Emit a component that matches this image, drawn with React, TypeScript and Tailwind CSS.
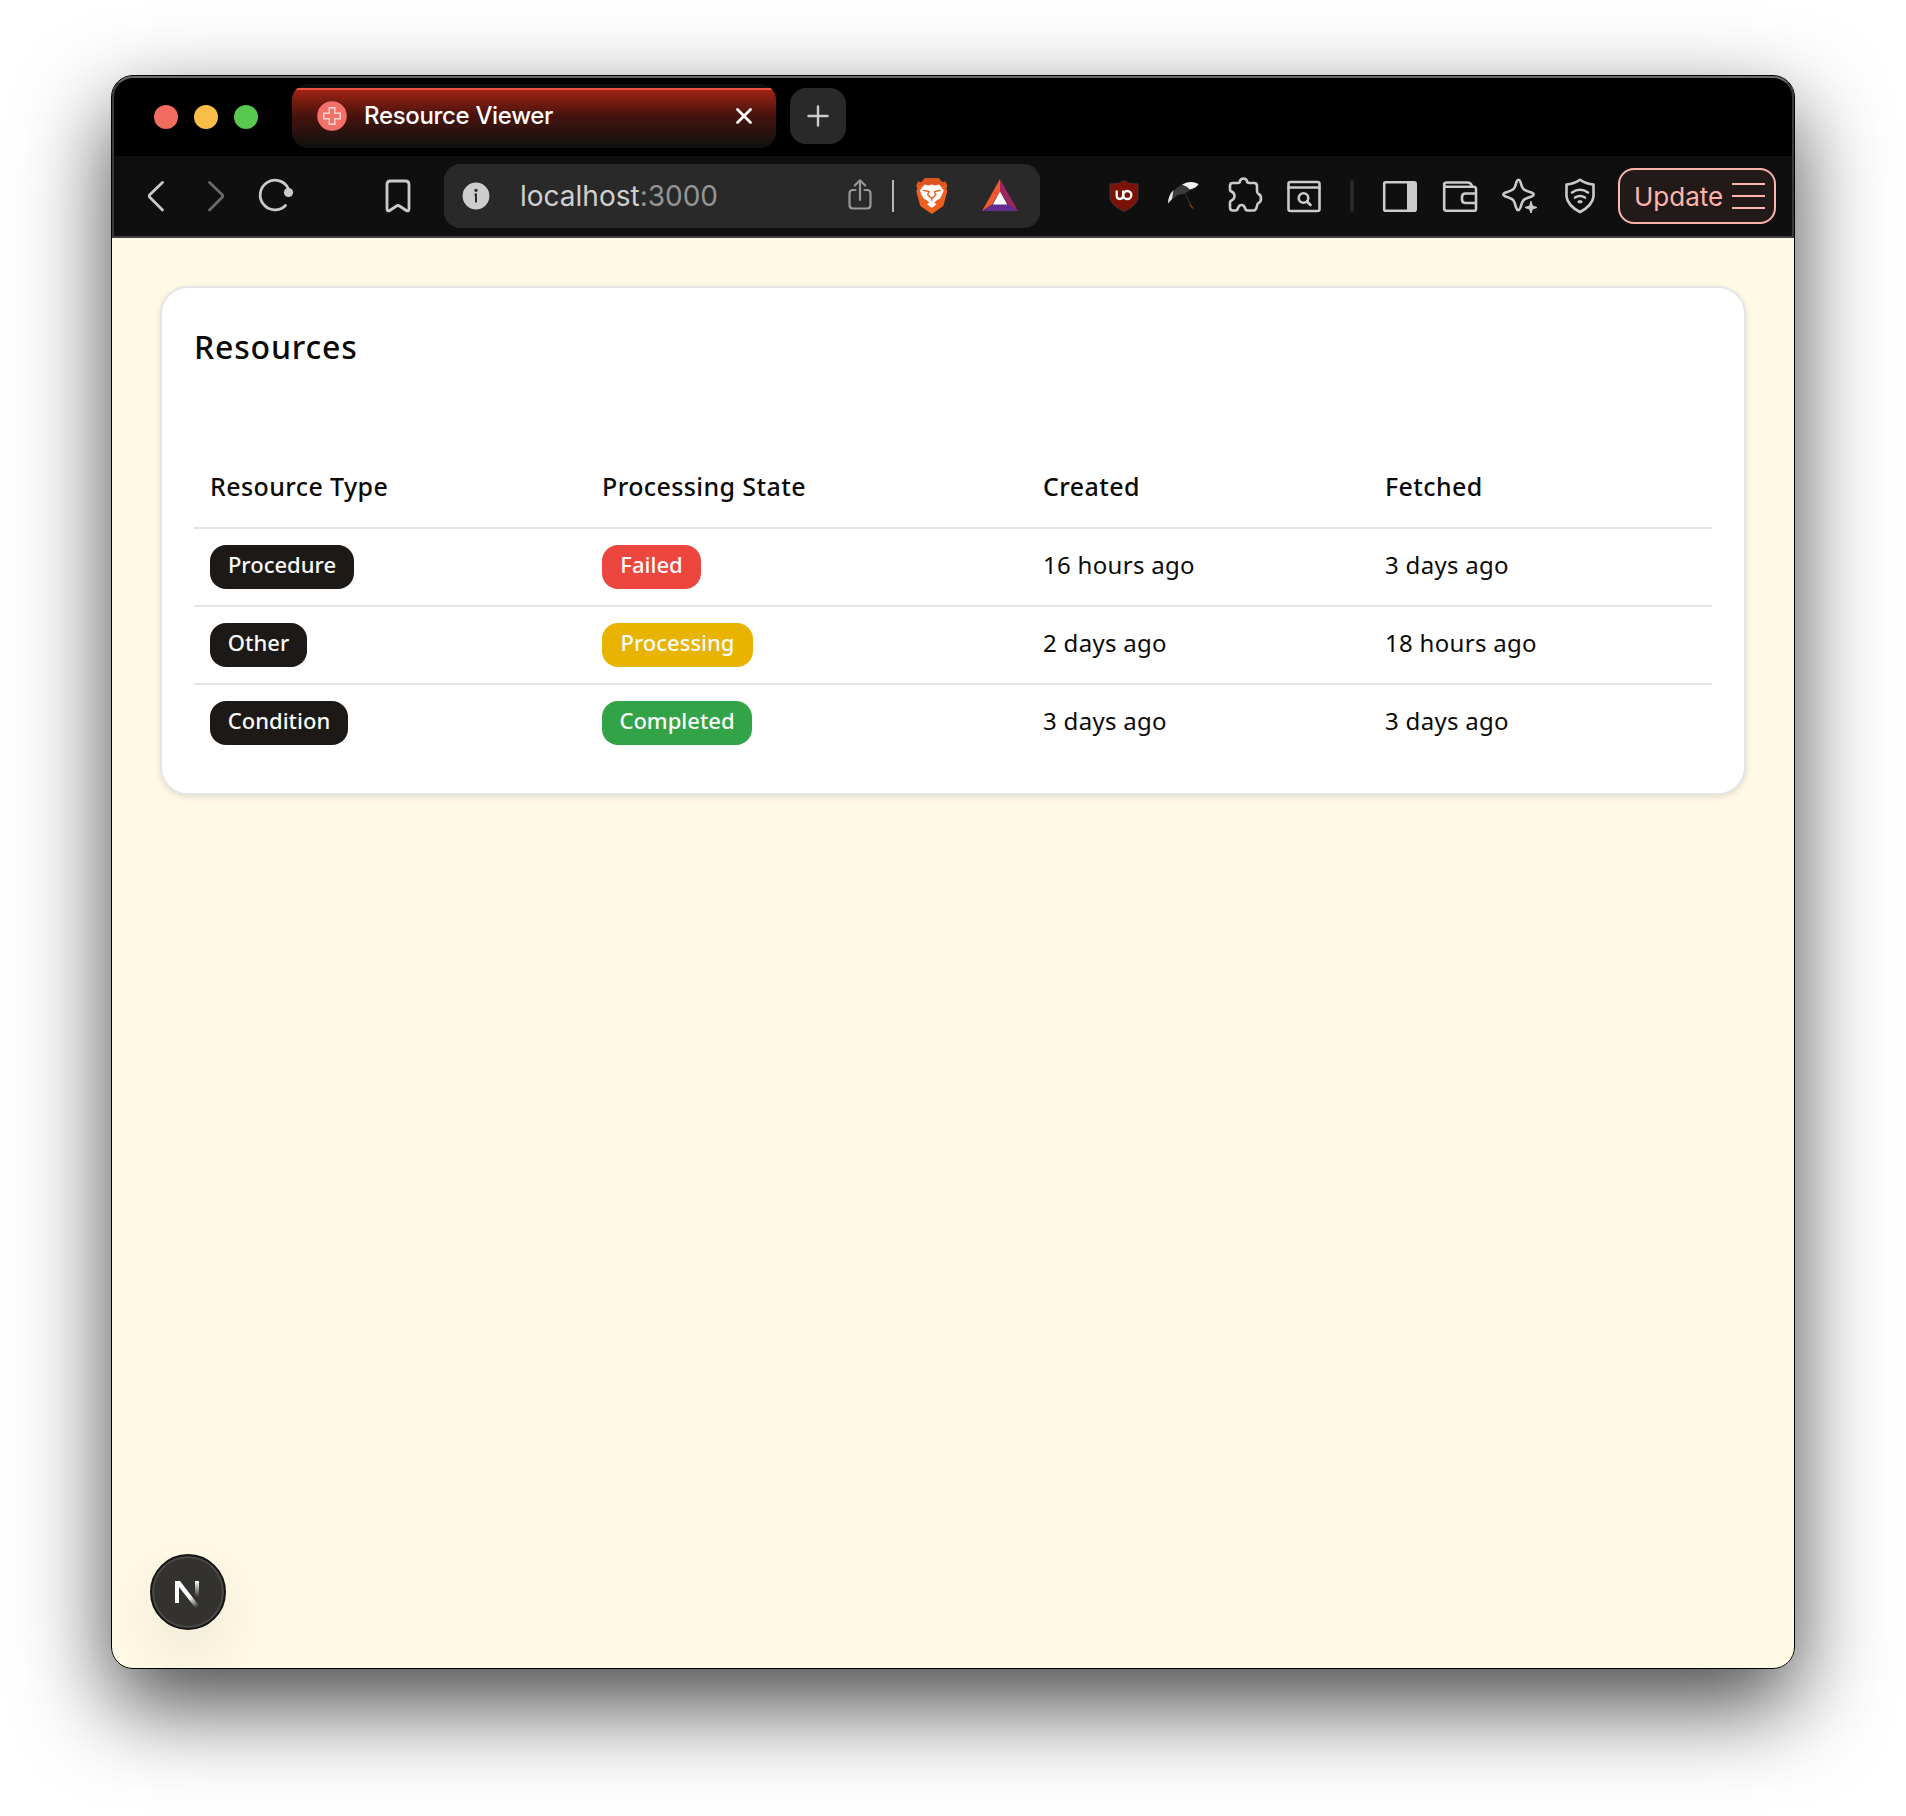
import React from "react";

function Toolbar() {
  return (
    <div className="flex h-[82px] items-center border-b-2 border-[#3f3f3f] bg-[#0f0f0f] text-[#c9c9c9]">
      <svg className="h-20 w-[332px] shrink-0" viewBox="112 156 332 80" fill="none" strokeLinecap="round" strokeLinejoin="round" strokeWidth="2.8" stroke="#cacaca">
        <path d="M162.5 182.5 150 194.5q-1.5 1.5 0 3L162.5 210" />
        <path d="M209.500 182.5 222 194.500q1.500 1.500 0 3L209.500 210" stroke="#6b6b6b" />
        <path d="M285.500 205.500A14.800 14.800 0 1 1 288.500 189" />
        <circle cx="288.500" cy="192.500" r="4.600" fill="#cacaca" stroke="none" />
        <path d="M387 208.500v-24q0-3.500 3.500-3.500h15q3.500 0 3.500 3.500v24q0 4-3.500 1.500l-6-4q-1.500-1-3 0l-6 4q-3.500 2.500-3.500-1.500Z" />
      </svg>
      <div className="flex h-16 w-[596px] shrink-0 items-center rounded-2xl bg-[#292929]">
        <svg className="ml-[18px] size-7" viewBox="0 0 28 28">
          <circle cx="14" cy="14" r="13.400" fill="#cdcdcd" />
          <circle cx="14" cy="8.300" r="1.600" fill="#292929" />
          <path d="M12.500 12.500h1.500v8" fill="none" stroke="#292929" strokeWidth="2" />
        </svg>
        <span className="ml-[30px] w-[310px] font-[Inter] text-[28px] leading-10 text-[#cfcfcf]">
          localhost<span className="text-[#949494]">:3000</span>
        </span>
        <svg className="h-16 w-[210px]" viewBox="830 164 210 64" fill="none">
          <g stroke="#989898" strokeWidth="2.2" strokeLinecap="round" strokeLinejoin="round">
            <path d="M855.500 190H853q-3.500 0-3.500 3.500V205q0 3.500 3.500 3.500h14q3.500 0 3.500-3.500v-11.500q0-3.500-3.500-3.500h-2.500M860 200v-19M854.800 185.500l5.200-5.200 5.200 5.200" />
          </g>
          <path d="M893 180v32" stroke="#b5b5b5" strokeWidth="2" />
          <path d="M925 178h13.500l3.800 4.200 3-.6 2 4-1 3 1 3-4 14.400-11.500 8-11.500-8-4-14.400 1-3-1-3 2-4 3 .6Z" fill="#ee5f20" />
          <path d="M925 178h13.500l3.800 4.200 3-.6 2 4H916.300l2-4 3 .6Z" fill="#dd561f" />
          <path d="m924.500 184.600 4 .8 3.300-.9 3.300.9 4-.8 4.600 5.900-1.600 4.100-2 4-3.300 1.600-2.400 2.300 1 1.500-3.600-1.800-3.600 1.800 1-1.500-2.400-2.300-3.300-1.600-2-4-1.600-4.100Z" fill="#fff" />
          <path d="m923 190.300 6 1.200-1.300 3.200 4 3.800 4-3.800-1.200-3.200 6-1.200M931.700 198.500v2.200" stroke="#ee5f20" strokeWidth="1.500" />
          <path d="m927 204.200 4.700-2.700 4.800 2.700-4.800 3.800Z" fill="#fff" />
          <path d="m1000 179-18 32 10-6.500 8-13Z" fill="#f15a2e" />
          <path d="m1000 179 18 32-10-6.500-8-13Z" fill="#9a2860" />
          <path d="m982 211 11-7h14l11 7Z" fill="#632e92" />
          <path d="m1000 191.500 7.300 13h-14.600Z" fill="#fff" />
        </svg>
      </div>
      <svg className="h-20 w-[578px] shrink-0" viewBox="1040 156 578 80" fill="none">
        <path d="M1124 180.500q6 4 14 3.500v14q-1.500 8-14 13.500-12.500-5.500-14-13.500v-14q8 .5 14-3.500Z" fill="#7b1208" stroke="#4d3a38" strokeWidth=".8" />
        <path d="M1116.700 190.500v5q0 3.500 3.200 3.500t3.200-3.500v-5" stroke="#fff" strokeWidth="2.300" />
        <circle cx="1127.300" cy="195" r="4" stroke="#fff" strokeWidth="2.300" />
        <path d="M1170 200q1-10 12-15.500l9 5-6 4-7 1.500-8 6Z" fill="#3a3a3a" />
        <path d="M1182 184.500q9-4.500 16.500-.5-1.500 3.500-8.500 5.500-4-3.500-8-5Z" fill="#f2f2f2" />
        <path d="M1168 203.500q0-8 5.500-13.500l-1.500 9Z" fill="#e5e5e5" />
        <path d="m1185 193 6 13" stroke="#332f2d" strokeWidth="1.200" />
        <path d="m1190 204.500 3 4" stroke="#6b3519" strokeWidth="1.900" />
        <g stroke="#cbcbcb" strokeWidth="2.600" strokeLinejoin="round" strokeLinecap="round">
          <path d="M1233 183h5q2.500 0 2.500-2 1-2.500 3.500-2.500t3.500 2.500q0 2 2.500 2h4.500q3 0 3 3v5q0 2 1.500 3 2.500 1 2.500 4.500t-2.500 4.500q-1.500 1-1.500 3-1 4.500-3.500 4.500h-6q-2 0-2.500-2.500-1-3-3.500-3t-3.500 3q-.5 2.500-2.500 2.500h-2.500q-3 0-3-3v-5q0-1.500 1.500-2 3-1.500 3-4.500t-3-4.500q-1.500-.5-1.500-2V186q0-3 2.500-3Z" transform="translate(-.5 0)" />
          <rect x="1288.500" y="182" width="31" height="29" rx="2" />
          <path d="M1288.500 187.500h31" />
          <circle cx="1303.500" cy="198" r="4.800" />
          <path d="m1307 201.500 3.500 3.500" />
        </g>
        <rect x="1350" y="180" width="4" height="32" rx="2" fill="#282828" />
        <g stroke="#cbcbcb" strokeWidth="2.600" strokeLinejoin="round" strokeLinecap="round">
          <rect x="1384.200" y="182.200" width="31.500" height="28.500" rx="1.500" />
          <path d="M1407 182h8v28.500h-8Z" fill="#cbcbcb" stroke="none" />
          <path d="M1444.200 183.500v25q0 2.300 2.300 2.300h27.700q1.800 0 1.800-1.800v-20q0-2.200-2.300-2.200h-27q-2.500 0-2.500-2 0-2.300 2.500-2.300h21q3.300 0 4.500 4M1475.500 193.500h-10q-3.500 0-3.500 3.500v2.500q0 3.500 3.500 3.500h10" />
          <path d="M1516.500 182q2-4.500 4 0c2 8 3 8 11 10.500q4.500 2 0 4c-8 2.500-9 3-11 11-2 4-3 3.500-4.500 0-2-8-2.500-8.500-10.500-11q-4.500-2 0-4c8-2.500 9-2.500 11-10.500Z" />
          <path d="m1531 201.500 1.500 4.500 4.500 1.500-4.500 1.500-1.500 4-1.500-4-4.500-1.500 4.500-1.500Z" fill="#cbcbcb" strokeWidth="1" />
          <path d="M1580 179.800q6 4.200 13.500 4.700v12q-1 9-13.500 15.500-12.500-6.500-13.500-15.500v-12q7.500-.5 13.500-4.700Z" />
          <path d="M1572 192.500q8-5.500 16 0M1575 197.500q5-3 10 0" />
          <path d="M1579 201.800h2" strokeWidth="3" />
        </g>
      </svg>
      <div className="flex h-14 w-[158px] shrink-0 items-center rounded-2xl border-2 border-[#ffb4ab] bg-[#211a19] pl-[14px] font-[Inter] text-[26px] text-[#ffb4ab]">
        <span className="w-[98px] pt-px">Update</span>
        <span className="flex w-[33px] flex-col gap-[10px]">
          <span className="h-[2px] bg-[#ffb4ab]" />
          <span className="h-[2px] bg-[#ffb4ab]" />
          <span className="h-[2px] bg-[#ffb4ab]" />
        </span>
      </div>
    </div>
  );
}

function TabStrip() {
  return (
    <div className="flex h-20 items-center bg-black">
      <div className="flex w-[180px] shrink-0 gap-4 pl-[42px] pt-[2px]">
        <span className="size-6 rounded-full bg-[#f26d5f]" />
        <span className="size-6 rounded-full bg-[#f9be48]" />
        <span className="size-6 rounded-full bg-[#59c84e]" />
      </div>
      <div className="h-16 w-[484px] shrink-0 overflow-hidden rounded-2xl bg-[#0f0f0f] pt-1">
        <div className="flex h-[60px] items-start border-t-2 border-[#e9503f] bg-linear-to-b from-[#a02312] via-[#47120d] via-45% to-[#0f0f0f] pl-[25px] pt-[11px]">
          <svg className="size-[30px]" viewBox="0 0 30 30">
            <circle cx="15" cy="15" r="14.800" fill="#f4716a" />
            <path d="M12.200 6.800h5.600v5.400h5.500v5.600h-5.500v5.500h-5.600v-5.500H6.700v-5.600h5.500Z" fill="none" stroke="#ffd9d6" strokeWidth="1.400" />
          </svg>
          <span className="ml-[17px] w-[372px] font-[Inter] text-2xl leading-[30px] font-medium tracking-[-0.33px] text-white">Resource Viewer</span>
          <svg className="mt-[7px] size-4" viewBox="0 0 16 16" stroke="#fff" strokeWidth="2.700" strokeLinecap="round">
            <path d="m1.500 1.500 13 13M14.500 1.500l-13 13" />
          </svg>
        </div>
      </div>
      <div className="ml-[14px] flex size-14 items-center justify-center rounded-2xl bg-[#292929]">
        <svg className="size-[22px]" viewBox="0 0 22 22" stroke="#cdcdcd" strokeWidth="2.400" strokeLinecap="round">
          <path d="M11 1.500v19M1.500 11h19" />
        </svg>
      </div>
    </div>
  );
}

const rows = [
  { type: "Procedure", typeWidth: "w-36", state: "Failed", stateStyle: "w-[99px] bg-[#ec463e]", created: "16 hours ago", fetched: "3 days ago" },
  { type: "Other", typeWidth: "w-[97px]", state: "Processing", stateStyle: "w-[151px] bg-[#e8b400]", created: "2 days ago", fetched: "18 hours ago" },
  { type: "Condition", typeWidth: "w-[138px]", state: "Completed", stateStyle: "w-[150px] bg-[#32a346]", created: "3 days ago", fetched: "3 days ago" },
];

const grid = "grid grid-cols-[392px_441px_342px_343px] items-center *:pl-4";
const badge = "flex h-11 items-center justify-center rounded-2xl pb-1 text-[22px] font-medium tracking-normal text-[#fafaf9]";

function ResourceCard() {
  return (
    <section className="h-[509px] rounded-[28px] border-2 border-[#e5e5e5] bg-white px-8 font-['Noto_Sans'] text-[#0c0a09] shadow-[0_2px_6px_rgba(0,0,0,0.12)]">
      <h1 className="pt-[39px] text-[32px] leading-10 font-medium tracking-[0.8px]">Resources</h1>
      <div className="mt-[78px]">
        <div className={`${grid} h-[84px] border-b-2 border-[#e5e5e5] pt-[2px] text-[25px] font-medium tracking-[0.4px]`}>
          <span>Resource Type</span>
          <span>Processing State</span>
          <span>Created</span>
          <span>Fetched</span>
        </div>
        {rows.map((r) => (
          <div key={r.type} className={`${grid} h-[78px] border-b-2 border-[#e5e5e5] text-2xl tracking-[0.3px] last:border-transparent`}>
            <div><div className={`${badge} ${r.typeWidth} bg-[#1c1917]`}>{r.type}</div></div>
            <div><div className={`${badge} ${r.stateStyle}`}>{r.state}</div></div>
            <span className="pb-1">{r.created}</span>
            <span className="pb-1">{r.fetched}</span>
          </div>
        ))}
      </div>
    </section>
  );
}

function DevBadge() {
  return (
    <div className="flex size-[76px] items-center justify-center rounded-full border-2 border-[#151513] bg-[#33322e] shadow-[inset_0_0_0_2px_#4b4a45,0_24px_64px_0_rgba(0,0,0,0.09)]">
      <svg className="size-[40px]" viewBox="0 0 40 40">
        <defs>
          <linearGradient id="stem" x1="0" y1="0" x2="0" y2="1"><stop stopColor="#fff" /><stop offset="1" stopColor="#fff" stopOpacity="0" /></linearGradient>
          <linearGradient id="diag" gradientUnits="userSpaceOnUse" x1="24" y1="24" x2="31" y2="34"><stop stopColor="#fff" /><stop offset="1" stopColor="#fff" stopOpacity="0" /></linearGradient>
        </defs>
        <path d="M7 9h5l20 26-3 3L11 15v16H7Z" fill="url(#diag)" />
        <path d="M27 9h4v16h-4Z" fill="url(#stem)" />
      </svg>
    </div>
  );
}

export default function App() {
  return (
    <div className="h-[1816px] w-[1906px] overflow-hidden bg-white pt-[75px] pl-[111px]">
      <div className="h-[1594px] w-[1684px] rounded-[22px] shadow-[0_36px_90px_rgba(0,0,0,0.72)]">
        <div className="relative flex h-full flex-col overflow-hidden rounded-[22px] border border-black bg-[#fff9e6]">
          <TabStrip />
          <Toolbar />
          <main className="flex flex-1 flex-col justify-between px-12 pt-12 pb-[38px]">
            <ResourceCard />
            <div className="-ml-[10px]"><DevBadge /></div>
          </main>
          <div className="pointer-events-none absolute inset-x-0 top-0 h-[162px] rounded-t-[21px] border-x-2 border-t-2 border-x-[#3a3a3a] border-t-[#6b6b6b]" />
        </div>
      </div>
    </div>
  );
}
